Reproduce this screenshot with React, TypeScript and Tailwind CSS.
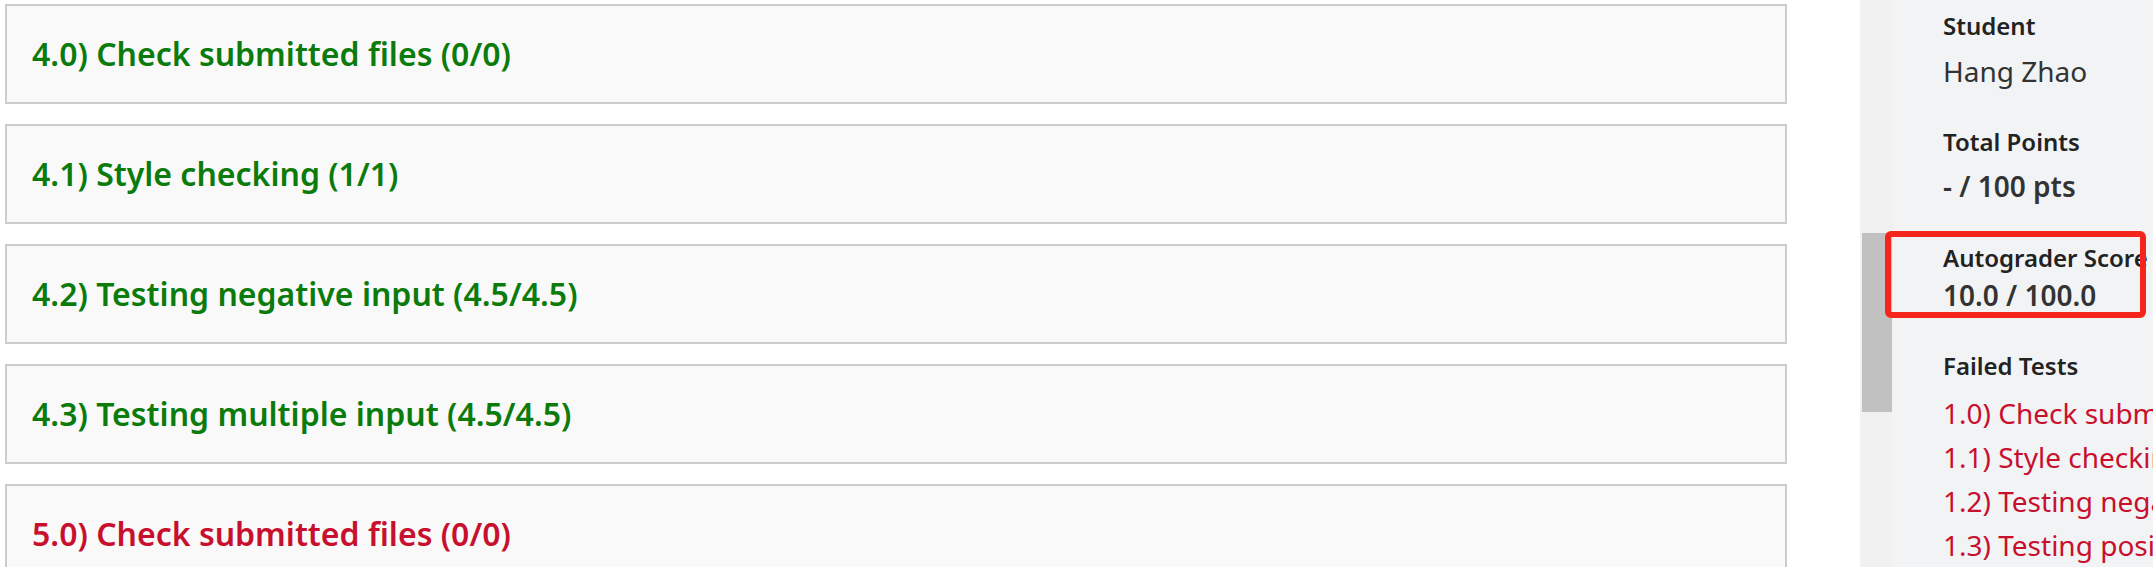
import React from 'react'

type Test = { label: string; passed: boolean }

const TESTS: Test[] = [
  { label: '4.0) Check submitted files (0/0)', passed: true },
  { label: '4.1) Style checking (1/1)', passed: true },
  { label: '4.2) Testing negative input (4.5/4.5)', passed: true },
  { label: '4.3) Testing multiple input (4.5/4.5)', passed: true },
  { label: '5.0) Check submitted files (0/0)', passed: false },
]

const FAILED = [
  '1.0) Check submitted files (0/0)',
  '1.1) Style checking (0/1)',
  '1.2) Testing negative input (0/4.5)',
  '1.3) Testing positive input (0/4.5)',
]

function TestPanel({ test }: { test: Test }) {
  return (
    <div className="h-[100px] shrink-0 border-2 border-[#cccccc] bg-[#f9f9f9] flex items-center pl-[25px]">
      <h3
        className={`text-[32px] font-semibold leading-none ${
          test.passed ? 'text-[#0b7b0b]' : 'text-[#c8102e]'
        }`}
      >
        {test.label}
      </h3>
    </div>
  )
}

export default function App() {
  return (
    <div className="relative w-[2153px] h-[567px] overflow-hidden flex bg-white font-['Noto_Sans',sans-serif]">
      {/* results column */}
      <div className="w-[1860px] shrink-0 pl-[5px] pr-[73px] pt-[4px] flex flex-col gap-[20px]">
        {TESTS.map((t) => (
          <TestPanel key={t.label} test={t} />
        ))}
      </div>

      {/* scrollbar strip */}
      <div className="w-[33px] shrink-0 bg-[#f1f1f1] pt-[233px] pl-[2px] pr-[1px]">
        <div className="h-[179px] bg-[#c1c1c1]" />
      </div>

      {/* sidebar */}
      <div className="flex-1 bg-[#f2f3f5] pl-[50px] pt-[10px] overflow-hidden whitespace-nowrap">
        <div className="text-[24px] leading-[32px] font-semibold text-[#222]">Student</div>
        <div className="mt-[11px] text-[28px] leading-[36px] text-[#333]">Hang Zhao</div>

        <div className="mt-[37px] text-[24px] leading-[32px] font-semibold text-[#222]">Total Points</div>
        <div className="mt-[10px] text-[28px] leading-[36px] font-semibold text-[#333]">- / 100 pts</div>

        <div className="mt-[38px] text-[24px] leading-[32px] font-semibold text-[#222]">Autograder Score</div>
        <div className="mt-[3px] text-[28px] leading-[36px] font-semibold text-[#333]">10.0 / 100.0</div>

        <div className="mt-[37px] text-[24px] leading-[32px] font-semibold text-[#222]">Failed Tests</div>
        <ul className="mt-[9px]">
          {FAILED.map((f) => (
            <li key={f} className="text-[28px] leading-[44px] text-[#c8102e]">
              {f}
            </li>
          ))}
        </ul>
      </div>

      {/* annotation highlight */}
      <div className="absolute left-[1885px] top-[231px] w-[261px] h-[87px] border-[6px] border-[#f5251b] rounded-[6px]" />
    </div>
  )
}
